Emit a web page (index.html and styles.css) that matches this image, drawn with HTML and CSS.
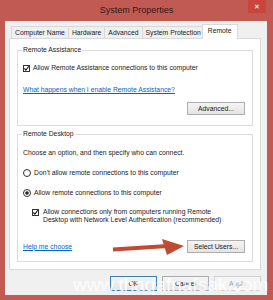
FILE: index.html
```html
<!DOCTYPE html>
<html lang="en">
<head>
    <meta charset="UTF-8">
    <title>System Properties</title>
    <link rel="stylesheet" href="styles.css">
</head>
<body>
    <div class="window">
        <div class="titlebar">
            <span class="title">System Properties</span>
            <span class="close">✕</span>
        </div>

        <div class="client">
            <div class="tabs">
                <div class="tab">Computer Name</div>
                <div class="tab">Hardware</div>
                <div class="tab">Advanced</div>
                <div class="tab">System Protection</div>
                <div class="tab active">Remote</div>
            </div>

            <div class="panel">
                <fieldset class="group group-assist">
                    <legend>Remote Assistance</legend>
                    <div class="option">
                        <svg class="checkbox" viewBox="0 0 7 7"><rect x="0.5" y="0.5" width="6" height="6" fill="#fff" stroke="#333"/><path d="M1.4 3.4l1.5 1.8 2.8-3.9" fill="none" stroke="#111" stroke-width="1.1"/></svg>
                        Allow Remote Assistance connections to this computer
                    </div>
                    <a class="link">What happens when I enable Remote Assistance?</a>
                    <div class="group-actions">
                        <button class="btn">Advanced...</button>
                    </div>
                </fieldset>

                <fieldset class="group group-desktop">
                    <legend>Remote Desktop</legend>
                    <p class="hint">Choose an option, and then specify who can connect.</p>
                    <div class="option">
                        <svg class="radio" viewBox="0 0 8 8"><circle cx="4" cy="4" r="3.5" fill="#fff" stroke="#333"/></svg>
                        Don’t allow remote connections to this computer
                    </div>
                    <div class="option">
                        <svg class="radio" viewBox="0 0 8 8"><circle cx="4" cy="4" r="3.5" fill="#fff" stroke="#333"/><circle cx="4" cy="4" r="1.8" fill="#222"/></svg>
                        Allow remote connections to this computer
                    </div>
                    <div class="option sub">
                        <svg class="checkbox" viewBox="0 0 7 7"><rect x="0.5" y="0.5" width="6" height="6" fill="#fff" stroke="#333"/><path d="M1.4 3.4l1.5 1.8 2.8-3.9" fill="none" stroke="#111" stroke-width="1.1"/></svg>
                        <span>Allow connections only from computers running Remote<br>Desktop with Network Level Authentication (recommended)</span>
                    </div>
                    <div class="group-footer">
                        <a class="link">Help me choose</a>
                        <button class="btn">Select Users...</button>
                    </div>
                </fieldset>
            </div>

            <div class="dialog-buttons">
                <button class="btn default">OK</button>
                <button class="btn">Cancel</button>
                <button class="btn" disabled>Apply</button>
            </div>
        </div>

        <!-- annotation arrow + watermark drawn over the dialog -->
        <svg class="arrow" viewBox="0 0 273 300">
            <path d="M113 249.5L168 246" stroke="#c24a32" stroke-width="4" fill="none"/>
            <polygon points="162,239 184,246 167,255" fill="#c24a32"/>
        </svg>
        <div class="watermark">www.thaqafnafsak.com</div>
    </div>
</body>
</html>
```

FILE: styles.css
```css
body {
    margin: 0;
    width: 273px;
    height: 300px;
    overflow: hidden;
    background-color: #c15a53;
    font-family: "Liberation Sans", Arial, sans-serif;
    font-size: 6.8px;
    color: #1a1a1a;
}

.window {
    position: relative;
    height: 300px;
    display: flex;
    flex-direction: column;
}

/* Title bar */
.titlebar {
    height: 21px;
    display: grid;
    grid-template-columns: 1fr auto 1fr;
}

.title {
    grid-column: 2;
    font-size: 9px;
    line-height: 20px;
    color: #2b1a18;
}

.close {
    grid-column: 3;
    justify-self: end;
    margin-right: 7px;
    width: 18px;
    height: 13px;
    background-color: #c9463d;
    color: #fff;
    font-size: 7px;
    line-height: 13px;
    text-align: center;
}

.client {
    flex: 1;
    margin: 0 6px 5px 5px;
    background-color: #f0f0f0;
    padding: 3px 6px 0 4px;
}

/* Tabs */
.tabs {
    display: flex;
    align-items: flex-end;
    height: 15px;
    padding-left: 2px;
    margin-bottom: -1px;
    position: relative;
    z-index: 1;
}

.tab {
    height: 11px;
    margin: 0 0 1px -1px;
    padding: 0 3px;
    border: 1px solid #d9d9d9;
    border-bottom: none;
    background-color: #f0f0f0;
    line-height: 11px;
}

.tab:first-child {
    margin-left: 0;
}

.tab.active {
    height: 14px;
    margin: 0 -2px 0 -3px;
    padding: 0 5px;
    background-color: #fff;
    line-height: 12px;
    position: relative;
}

.panel {
    height: 232px;
    box-sizing: border-box;
    background-color: #fff;
    border: 1px solid #d9d9d9;
    padding: 0 7px;
}

/* Group boxes */
.group {
    margin: 6px 0 0;
    padding: 0 7px 10px 5px;
    border: 1px solid #dcdcdc;
    min-width: 0;
}

.group legend {
    padding: 0 1px;
    margin-left: -1px;
    line-height: 10px;
}

.option {
    display: flex;
    align-items: center;
    gap: 3px;
    line-height: 10px;
}

.checkbox {
    width: 7px;
    height: 7px;
    flex: none;
}

.radio {
    width: 8px;
    height: 8px;
    flex: none;
}

.group-assist .option {
    margin-top: 8px;
}

.link {
    display: block;
    margin-top: 12px;
    color: #0066cc;
    text-decoration: underline;
    line-height: 10px;
}

.group-actions {
    display: flex;
    justify-content: flex-end;
    margin-top: 7px;
}

.btn {
    width: 58px;
    height: 13px;
    padding: 0;
    font: inherit;
    color: #1a1a1a;
    border: 1px solid #adadad;
    background: linear-gradient(#f4f4f4, #e4e4e4);
}

.group-desktop {
    margin-top: 3px;
    padding-bottom: 8px;
}

.hint {
    margin: 9px 0 0;
    line-height: 10px;
}

.group-desktop .option {
    margin-top: 10px;
}

.option.sub {
    margin-left: 9px;
    align-items: flex-start;
    gap: 4px;
    line-height: 8px;
}

.option.sub .checkbox {
    margin-top: 1px;
}

.group-footer {
    display: flex;
    justify-content: space-between;
    align-items: center;
    margin-top: 16px;
}

.group-footer .link {
    margin-top: 0;
}

/* OK / Cancel / Apply */
.dialog-buttons {
    display: flex;
    justify-content: flex-end;
    gap: 5px;
    margin-top: 6px;
}

.dialog-buttons .btn {
    width: 47px;
    height: 15px;
}

.btn.default {
    border-color: #3c7fb1;
}

.btn:disabled {
    color: #a0a0a0;
    border-color: #d0d0d0;
    background: #f4f4f4;
}

.arrow {
    position: absolute;
    left: 0;
    top: 0;
    width: 273px;
    height: 300px;
    pointer-events: none;
}

.watermark {
    position: absolute;
    left: 73px;
    top: 275px;
    font-size: 19px;
    line-height: 19px;
    color: rgba(255, 255, 255, 0.85);
    white-space: nowrap;
}
```
